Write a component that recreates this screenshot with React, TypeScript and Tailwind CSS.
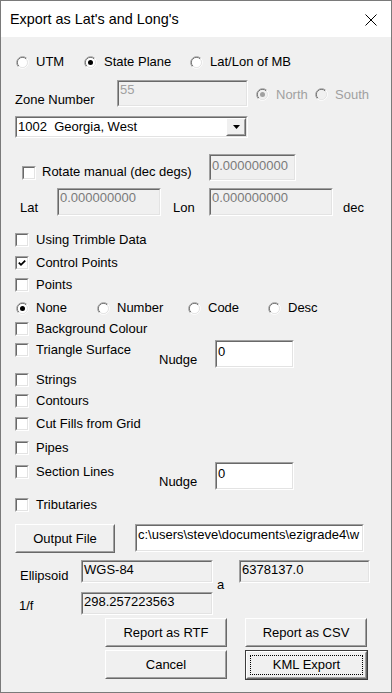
import React from "react";
import clsx from "clsx";

function Sunken({ className, inner, children }: { className?: string; inner?: string; children?: React.ReactNode }) {
  return (
    <div className={clsx("shrink-0 border border-t-[#a0a0a0] border-l-[#a0a0a0] border-b-white border-r-white", className)}>
      <div className={clsx("h-full w-full overflow-hidden whitespace-nowrap border border-t-[#696969] border-l-[#696969] border-b-[#e3e3e3] border-r-[#e3e3e3]", inner)}>
        {children}
      </div>
    </div>
  );
}

function Button({ className, children, isDefault }: { className?: string; children: React.ReactNode; isDefault?: boolean }) {
  const face = (
    <div className="h-full w-full border border-t-white border-l-white border-b-[#696969] border-r-[#696969]">
      <div className="h-full w-full border border-t-[#f0f0f0] border-l-[#f0f0f0] border-b-[#a0a0a0] border-r-[#a0a0a0] bg-[#f0f0f0] flex items-center justify-center p-[2px]">
        {isDefault ? (
          <div className="h-full w-full border border-dotted border-black flex items-center justify-center">{children}</div>
        ) : (
          children
        )}
      </div>
    </div>
  );
  if (isDefault) return <div className={clsx("shrink-0 border border-[#3c3c3c]", className)}>{face}</div>;
  return <div className={clsx("shrink-0", className)}>{face}</div>;
}

function RadioDot({ on, disabled }: { on?: boolean; disabled?: boolean }) {
  return (
    <svg width="13" height="13" viewBox="0 0 13 13" className="shrink-0">
      <path d="M2.26 10.74A6 6 0 0 1 10.74 2.26" fill="none" stroke="#a0a0a0" />
      <path d="M10.74 2.26A6 6 0 0 1 2.26 10.74" fill="none" stroke="#ffffff" />
      <path d="M2.96 10.04A5 5 0 0 1 10.04 2.96" fill="none" stroke="#696969" />
      <path d="M10.04 2.96A5 5 0 0 1 2.96 10.04" fill="none" stroke="#e3e3e3" />
      <circle cx="6.5" cy="6.5" r="4.5" fill={disabled ? "#f0f0f0" : "#ffffff"} />
      {on && <circle cx="6.5" cy="6.5" r="2.5" fill={disabled ? "#a0a0a0" : "#000000"} />}
    </svg>
  );
}

function Radio({ label, on, disabled, className }: { label: string; on?: boolean; disabled?: boolean; className?: string }) {
  return (
    <div className={clsx("flex items-center shrink-0", className)}>
      <RadioDot on={on} disabled={disabled} />
      <span className={clsx("ml-[7px] whitespace-nowrap", disabled && "text-[#a0a0a0]")}>{label}</span>
    </div>
  );
}

function CheckBox({ checked }: { checked?: boolean }) {
  return (
    <div className="w-[14px] h-[14px] shrink-0 border border-t-[#a0a0a0] border-l-[#a0a0a0] border-b-white border-r-white">
      <div className="w-full h-full bg-white border border-t-[#696969] border-l-[#696969] border-b-[#e3e3e3] border-r-[#e3e3e3] flex items-center justify-center">
        {checked && (
          <svg width="8" height="8" viewBox="0 0 8 8">
            <path d="M0.8 3.6 L3 5.8 L7.2 1.6" stroke="#000" strokeWidth="1.8" fill="none" />
          </svg>
        )}
      </div>
    </div>
  );
}

function Check({ label, checked, className }: { label: string; checked?: boolean; className?: string }) {
  return (
    <div className={clsx("flex items-center h-[16px] shrink-0", className)}>
      <CheckBox checked={checked} />
      <span className="ml-[7px] whitespace-nowrap">{label}</span>
    </div>
  );
}

export default function App() {
  return (
    <div className="w-[392px] h-[693px] border border-[#7a7a7a] bg-[#f0f0f0] text-[13px] leading-[16px] text-black font-['Liberation_Sans',Arial,sans-serif] overflow-hidden">
      {/* title bar */}
      <div className="h-[36px] bg-white flex items-center justify-between pl-[9px] pr-[14px]">
        <span className="text-[14.4px]">Export as Lat's and Long's</span>
        <svg width="12" height="12" viewBox="0 0 12 12" className="mt-[1px]">
          <path d="M0.5 0.5 L11.5 11.5 M11.5 0.5 L0.5 11.5" stroke="#000" strokeWidth="1" />
        </svg>
      </div>

      <div className="flex flex-col">
        {/* projection */}
        <div className="mt-[15px] h-[20px] flex items-center pl-[15px]">
          <Radio label="UTM" className="w-[68px]" />
          <Radio label="State Plane" on className="w-[106px]" />
          <Radio label="Lat/Lon of MB" />
        </div>

        {/* zone */}
        <div className="mt-[8px] h-[27px] flex items-start">
          <span className="ml-[14px] mt-[12px] w-[102px] shrink-0">Zone Number</span>
          <Sunken className="w-[131px] h-[27px]" inner="bg-[#f0f0f0] text-[#a0a0a0] pl-[1px]">55</Sunken>
          <Radio label="North" on disabled className="ml-[8px] mt-[8px] w-[59px] h-[13px]" />
          <Radio label="South" disabled className="mt-[8px] h-[13px]" />
        </div>

        {/* combo */}
        <Sunken className="mt-[9px] ml-[14px] w-[233px] h-[22px]" inner="bg-white flex items-center">
          <span className="flex-1 pl-[1px] whitespace-pre">1002  Georgia, West</span>
          <div className="w-[20px] h-full border border-t-white border-l-white border-b-[#696969] border-r-[#696969]">
            <div className="w-full h-full border border-t-[#f0f0f0] border-l-[#f0f0f0] border-b-[#a0a0a0] border-r-[#a0a0a0] bg-[#f0f0f0] flex items-center justify-center">
              <svg width="7" height="4" viewBox="0 0 7 4">
                <path d="M0 0 H7 L3.5 4 Z" fill="#000" />
              </svg>
            </div>
          </div>
        </Sunken>

        {/* rotate */}
        <div className="mt-[16px] h-[27px] flex items-start">
          <div className="ml-[21px] mt-[12px]">
            <CheckBox />
          </div>
          <span className="ml-[6px] mt-[10px] w-[167px] shrink-0">Rotate manual (dec degs)</span>
          <Sunken className="w-[87px] h-[27px]" inner="bg-[#f0f0f0] text-[#7a7a7a] pl-[1px] pt-[2px]">0.000000000</Sunken>
        </div>

        {/* lat / lon */}
        <div className="mt-[7px] h-[28px] flex items-start">
          <span className="ml-[19px] mt-[12px] w-[37px] shrink-0">Lat</span>
          <Sunken className="w-[104px] h-[28px]" inner="bg-[#f0f0f0] text-[#7a7a7a] pl-[1px]">0.000000000</Sunken>
          <span className="ml-[12px] mt-[12px] w-[36px] shrink-0">Lon</span>
          <Sunken className="w-[124px] h-[28px]" inner="bg-[#f0f0f0] text-[#7a7a7a] pl-[1px]">0.000000000</Sunken>
          <span className="ml-[10px] mt-[12px]">dec</span>
        </div>

        <Check label="Using Trimble Data" className="mt-[16px] ml-[14px]" />
        <Check label="Control Points" checked className="mt-[7px] ml-[14px]" />
        <Check label="Points" className="mt-[6px] ml-[14px]" />

        <div className="mt-[7px] h-[16px] flex items-center pl-[15px]">
          <Radio label="None" on className="w-[81px]" />
          <Radio label="Number" className="w-[91px]" />
          <Radio label="Code" className="w-[80px]" />
          <Radio label="Desc" />
        </div>

        <Check label="Background Colour" className="mt-[5px] ml-[14px]" />

        <div className="mt-[3px] h-[28px] flex items-start">
          <Check label="Triangle Surface" className="ml-[14px] mt-[2px] w-[144px]" />
          <span className="mt-[12px] w-[56px] shrink-0">Nudge</span>
          <Sunken className="w-[79px] h-[28px]" inner="bg-white pl-[1px] pt-[2px]">0</Sunken>
        </div>

        <Check label="Strings" className="mt-[4px] ml-[14px]" />
        <Check label="Contours" className="mt-[5px] ml-[14px]" />
        <Check label="Cut Fills from Grid" className="mt-[7px] ml-[14px]" />
        <Check label="Pipes" className="mt-[8px] ml-[14px]" />

        <div className="mt-[6px] h-[28px] flex items-start">
          <Check label="Section Lines" className="ml-[14px] mt-[2px] w-[144px]" />
          <span className="mt-[12px] w-[56px] shrink-0">Nudge</span>
          <Sunken className="w-[79px] h-[28px]" inner="bg-white pl-[1px] pt-[2px]">0</Sunken>
        </div>

        <Check label="Tributaries" className="mt-[7px] ml-[14px]" />

        {/* output file */}
        <div className="mt-[11px] h-[29px] flex items-start">
          <Button className="ml-[14px] w-[100px] h-[29px]">Output File</Button>
          <Sunken className="ml-[20px] w-[229px] h-[28px]" inner="bg-white pl-[1px] pt-[1px]">
            c:\users\steve\documents\ezigrade4\w
          </Sunken>
        </div>

        {/* ellipsoid */}
        <div className="mt-[7px] h-[23px] flex items-start">
          <span className="ml-[19px] mt-[8px] w-[61px] shrink-0">Ellipsoid</span>
          <Sunken className="w-[132px] h-[23px]" inner="bg-[#f0f0f0] pl-[1px]">WGS-84</Sunken>
          <span className="mt-[17px] w-[26px] pl-[4px] shrink-0">a</span>
          <Sunken className="w-[131px] h-[23px]" inner="bg-[#f0f0f0] pl-[1px]">6378137.0</Sunken>
        </div>

        <div className="mt-[9px] h-[23px] flex items-start">
          <span className="ml-[18px] mt-[6px] w-[62px] shrink-0">1/f</span>
          <Sunken className="w-[132px] h-[23px]" inner="bg-[#f0f0f0] pl-[1px]">298.257223563</Sunken>
        </div>

        {/* actions */}
        <div className="mt-[3px] flex items-start">
          <Button className="ml-[104px] w-[122px] h-[29px]">Report as RTF</Button>
          <Button className="ml-[18px] w-[122px] h-[29px]">Report as CSV</Button>
        </div>
        <div className="mt-[3px] flex items-start">
          <Button className="ml-[104px] w-[122px] h-[29px]">Cancel</Button>
          <Button isDefault className="ml-[18px] w-[123px] h-[30px]">KML Export</Button>
        </div>
      </div>
    </div>
  );
}
